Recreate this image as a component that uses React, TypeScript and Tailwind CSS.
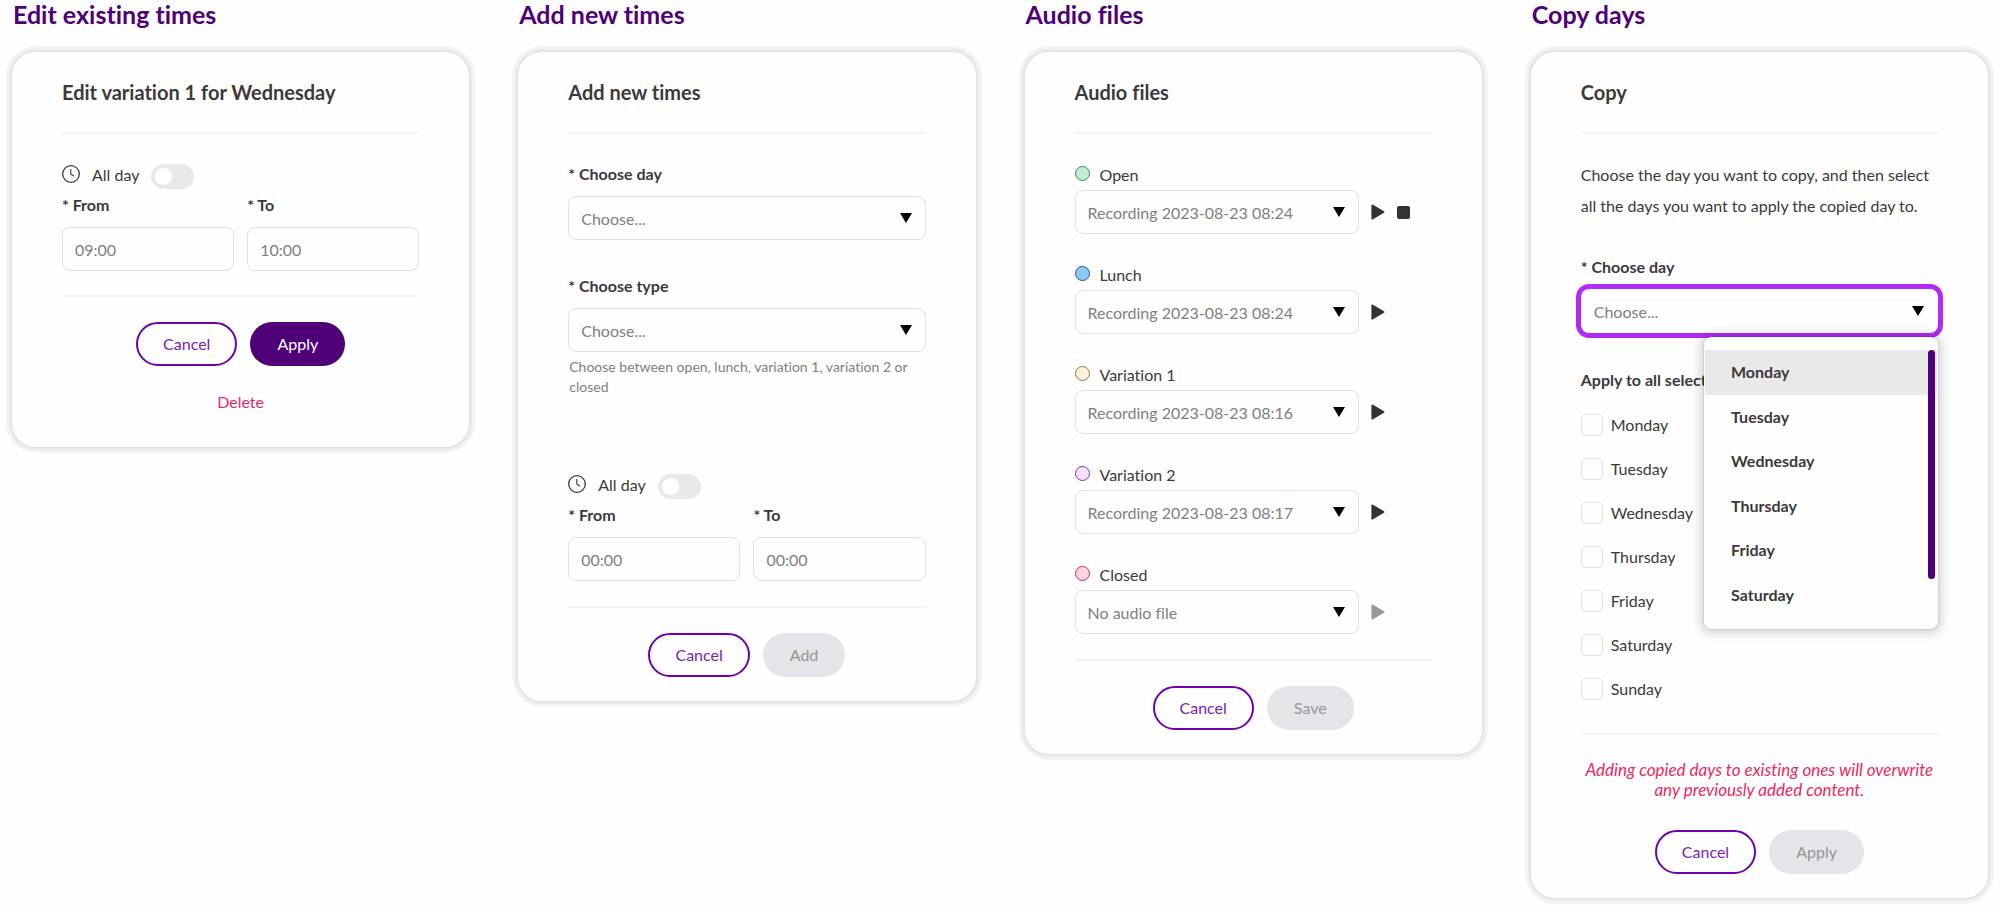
import { useId, type ReactNode } from "react";

const DAYS = ["Monday", "Tuesday", "Wednesday", "Thursday", "Friday", "Saturday", "Sunday"];

const AUDIO = [
  { name: "Open", file: "Recording 2023-08-23 08:24", dot: "bg-[#c3edd3] border-[#2f8f63]", playing: true },
  { name: "Lunch", file: "Recording 2023-08-23 08:24", dot: "bg-[#8cc9f5] border-[#1f5a86]" },
  { name: "Variation 1", file: "Recording 2023-08-23 08:16", dot: "bg-[#fdf0dd] border-[#a8702a]" },
  { name: "Variation 2", file: "Recording 2023-08-23 08:17", dot: "bg-[#f3e3fb] border-[#8a2bc2]" },
  { name: "Closed", file: "No audio file", dot: "bg-[#fcd5de] border-[#e0245e]", empty: true },
];

function Panel({ heading, title, children }: { heading: string; title: string; children: ReactNode }) {
  return (
    <section>
      <h2 className="pl-px mb-6 text-[25px] leading-7 font-bold text-[#4f0078]">{heading}</h2>
      <div className="rounded-3xl bg-[#fefefe] px-[50px] pt-7 pb-6 shadow-[0_0_0_1px_#e3e1e4,0_0_0_3px_#e9e9e9,0_0_0_6px_#f3f3f3]">
        <h3 className="text-xl leading-6 font-bold">{title}</h3>
        <Divider className="mt-7" />
        {children}
      </div>
    </section>
  );
}

function Divider({ className }: { className: string }) {
  return <hr className={`border-t-2 border-[#f3f2f4] ${className}`} />;
}

function Choice({ id, value, focused }: { id: string; value: string; focused?: boolean }) {
  return (
    <div className="relative">
      <select
        id={id}
        className={`block w-full h-11 appearance-none rounded-lg border bg-[#fefefe] pt-0.5 pl-3 pr-10 text-[#808080] outline-none ${
          focused ? "border-transparent ring-5 ring-[#b32bf3]" : "border-[#e1e1e3]"
        }`}
      >
        <option>{value}</option>
      </select>
      <svg className="pointer-events-none absolute right-[14px] top-[17px]" width="12" height="10" viewBox="0 0 12 10">
        <path d="M0 0h12L6 10z" fill="#000" />
      </svg>
    </div>
  );
}

function ChoiceField({ label, focused }: { label: string; focused?: boolean }) {
  const id = useId();
  return (
    <>
      <label htmlFor={id} className="block mb-[10px] leading-6 font-bold">
        * {label}
      </label>
      <Choice id={id} value="Choose..." focused={focused} />
    </>
  );
}

function TimeField({ label, value }: { label: string; value: string }) {
  const id = useId();
  return (
    <div>
      <label htmlFor={id} className="block mb-[10px] leading-6 font-bold">
        * {label}
      </label>
      <input
        id={id}
        type="text"
        defaultValue={value}
        className="block w-full h-11 rounded-lg border border-[#e1e1e3] bg-[#fefefe] px-3 text-[#808080]"
      />
    </div>
  );
}

function TimeRange({ from, to }: { from: string; to: string }) {
  return (
    <>
      <label className="flex h-[26px] items-start">
        <svg className="mt-0.5 mr-3" width="18" height="18" viewBox="0 0 18 18" fill="none" stroke="#3c3c3c">
          <circle cx="9" cy="9" r="8.3" strokeWidth="1.3" />
          <path d="M8.8 4v5.3l3.4 2" strokeWidth="1.1" />
        </svg>
        <span className="leading-6">All day</span>
        <input
          type="checkbox"
          role="switch"
          className="relative ml-3 mt-px h-[25px] w-[43px] appearance-none rounded-full bg-[#e9e9e9] before:absolute before:left-[4px] before:top-[4px] before:size-[17px] before:rounded-full before:bg-white checked:bg-[#4f0078] checked:before:left-[22px]"
        />
      </label>
      <div className="mt-1 grid grid-cols-2 gap-[13px]">
        <TimeField label="From" value={from} />
        <TimeField label="To" value={to} />
      </div>
    </>
  );
}

function Actions({ submit, enabled, className }: { submit: string; enabled?: boolean; className: string }) {
  return (
    <div className={`flex justify-center gap-[13px] ${className}`}>
      <button type="button" className="h-11 rounded-full border-2 border-[#7000aa] px-[25px] text-[#7d1cb4]">
        Cancel
      </button>
      <button
        type="button"
        disabled={!enabled}
        className="h-11 rounded-full bg-[#4f0078] px-[27px] text-white disabled:bg-[#e5e4e9] disabled:text-[#959595]"
      >
        {submit}
      </button>
    </div>
  );
}

function AudioRow({ row }: { row: (typeof AUDIO)[number] }) {
  const id = useId();
  return (
    <div>
      <div className="mb-[3px] flex items-center">
        <span className={`mr-[10px] -mt-1 size-[15px] rounded-full border ${row.dot}`} />
        <label htmlFor={id} className="leading-6">
          {row.name}
        </label>
      </div>
      <div className="flex items-center gap-3">
        <div className="w-[284px]">
          <Choice id={id} value={row.file} />
        </div>
        <button type="button" aria-label="Play" disabled={row.empty} className="text-[#333] disabled:text-[#999]">
          <svg className="block" width="14" height="16" viewBox="0 0 14 16">
            <path d="M1.2 1.2 12.6 8 1.2 14.8z" fill="currentColor" stroke="currentColor" strokeWidth="1.6" strokeLinejoin="round" />
          </svg>
        </button>
        {row.playing && <button type="button" aria-label="Stop" className="size-[13px] rounded-xs bg-[#333]" />}
      </div>
    </div>
  );
}

function DayMenu() {
  return (
    <div className="absolute right-0 top-full z-10 mt-1 w-[234px] rounded-lg bg-[#fefefe] px-px pt-[13px] pb-3 shadow-[0_0_0_1px_rgba(0,0,0,0.06),0_1px_10px_4px_rgba(0,0,0,0.16)]">
      <ul role="listbox" aria-label="Days" className="flex h-[267px] flex-col">
        {DAYS.slice(0, 6).map((day, i) => (
          <li
            key={day}
            role="option"
            aria-selected={i === 0}
            className={`flex flex-1 items-center pl-[26px] font-bold ${i === 0 ? "bg-[#e9e9e9]" : ""}`}
          >
            {day}
          </li>
        ))}
      </ul>
      <div className="absolute right-[3px] top-[13px] h-[229px] w-[7px] rounded-full bg-[#4f0078]" />
    </div>
  );
}

export default function App() {
  return (
    <main className="grid min-h-screen grid-cols-4 items-start gap-[49px] bg-[#fefefe] px-3 pb-3 font-['Lato',sans-serif] text-base text-[#3a3a3a] [font-variant-ligatures:none]">
      <Panel heading="Edit existing times" title="Edit variation 1 for Wednesday">
        <div className="mt-[29px]">
          <TimeRange from="09:00" to="10:00" />
        </div>
        <Divider className="mt-6" />
        <Actions submit="Apply" enabled className="mt-[25px]" />
        <div className="mt-6 mb-[9px] text-center">
          <button type="button" className="leading-6 text-[#ea2a62]">
            Delete
          </button>
        </div>
      </Panel>

      <Panel heading="Add new times" title="Add new times">
        <div className="mt-7">
          <ChoiceField label="Choose day" />
        </div>
        <div className="mt-[34px]">
          <ChoiceField label="Choose type" />
        </div>
        <p className="mt-[5px] mb-[76px] pl-px text-sm leading-5 text-[#808080]">
          Choose between open, lunch, variation 1, variation 2 or closed
        </p>
        <TimeRange from="00:00" to="00:00" />
        <Divider className="mt-[25px]" />
        <Actions submit="Add" className="mt-[25px]" />
      </Panel>

      <Panel heading="Audio files" title="Audio files">
        <div className="mt-[29px] flex flex-col gap-[29px]">
          {AUDIO.map((row) => (
            <AudioRow key={row.name} row={row} />
          ))}
        </div>
        <Divider className="mt-[25px]" />
        <Actions submit="Save" className="mt-[25px]" />
      </Panel>

      <Panel heading="Copy days" title="Copy">
        <p className="mt-[25px] leading-[31px]">
          Choose the day you want to copy, and then select all the days you want to apply the copied day to.
        </p>
        <div className="relative mt-[34px]">
          <ChoiceField label="Choose day" focused />
          <DayMenu />
        </div>
        <fieldset className="mt-[35px]">
          <legend className="leading-6 font-bold">Apply to all select</legend>
          <div className="mt-[22px] flex flex-col gap-[22px]">
            {DAYS.map((day) => (
              <label key={day} className="flex items-center gap-2 leading-[22px]">
                <input type="checkbox" className="size-[22px] appearance-none rounded-[5px] border border-[#e3e3e5] checked:bg-[#4f0078]" />
                {day}
              </label>
            ))}
          </div>
        </fieldset>
        <Divider className="mt-[33px]" />
        <p className="mt-[25px] text-center text-[17px] leading-5 text-[#ea2a62] italic">
          Adding copied days to existing ones will overwrite any previously added content.
        </p>
        <Actions submit="Apply" className="mt-[30px]" />
      </Panel>
    </main>
  );
}
